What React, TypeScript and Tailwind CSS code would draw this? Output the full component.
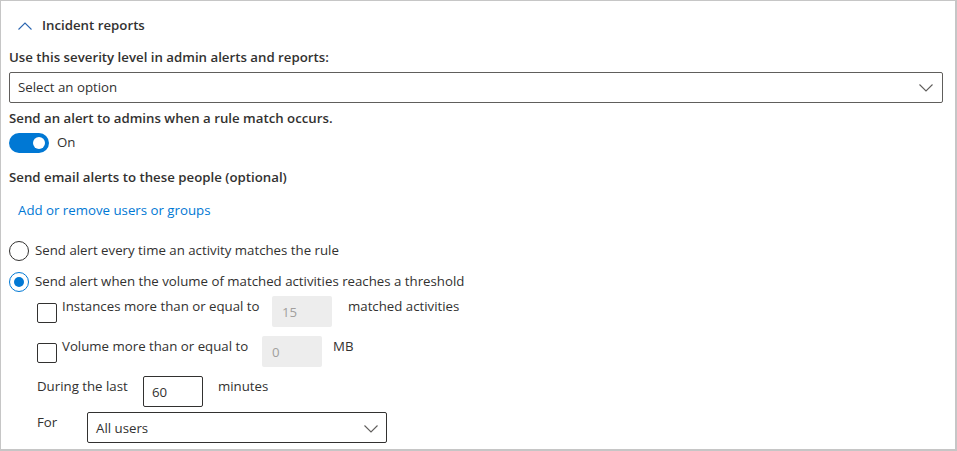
import React, { useState } from "react";

const font = { fontFamily: '"Open Sans", "Noto Sans", Arial, sans-serif' };

const Chevron = ({ up = false, className = "" }: { up?: boolean; className?: string }) => (
    <svg width="14" height="8" viewBox="0 0 14 8" className={className} fill="none">
        <path d={up ? "M0.5 7.5 L7 1 L13.5 7.5" : "M0.5 0.5 L7 7 L13.5 0.5"} stroke="currentColor" strokeWidth="1.1"/>
    </svg>
);

const Radio = ({ checked }: { checked: boolean }) => (
    <span
        className={`flex h-[20px] w-[20px] shrink-0 items-center justify-center rounded-full border ${checked ? "border-[#0078d4]" : "border-[#323130]"}`}
    >
        {checked && <span className="h-[10px] w-[10px] rounded-full bg-[#0078d4]"/>}
    </span>
);

const Checkbox = () => (
    <span className="mt-[7px] h-[20px] w-[20px] shrink-0 rounded-[2px] border border-[#323130] bg-white"/>
);

export default function App() {
    const [on] = useState(true);

    return (
        <div
            className="h-[451px] w-[957px] overflow-hidden border-t border-l border-r-2 border-b-2 border-[#c6c6c6] bg-white pl-[8px] pr-[12px] text-[13.25px] text-[#323130]"
            style={font}
        >
            {/* header */}
            <div className="mt-[15px] flex h-[20px] items-center pl-[8px]">
                <Chevron up className="w-[16px] text-[#2b65b0]"/>
                <span className="ml-[9px] font-semibold">Incident reports</span>
            </div>

            <div className="mt-[11px] h-[20px] font-semibold leading-[20px]">
                Use this severity level in admin alerts and reports:
            </div>
            <div className="mt-[5px] flex h-[31px] items-center justify-between rounded-[2px] border border-[#605e5c] pl-[8px] pr-[9px]">
                <span>Select an option</span>
                <Chevron className="text-[#605e5c]"/>
            </div>

            <div className="mt-[5px] h-[20px] font-semibold leading-[20px]">
                Send an alert to admins when a rule match occurs.
            </div>
            <div className="mt-[5px] flex h-[20px] items-center">
                <span className="flex h-[20px] w-[40px] items-center justify-end rounded-full bg-[#0078d4] pr-[4px]">
                    <span className="h-[12px] w-[12px] rounded-full bg-white"/>
                </span>
                <span className="ml-[8px]">{on ? "On" : "Off"}</span>
            </div>

            <div className="mt-[14px] h-[20px] font-semibold leading-[20px]">
                Send email alerts to these people (optional)
            </div>
            <div className="mt-[13px] h-[20px] pl-[9px] leading-[20px] text-[#0078d4]">
                Add or remove users or groups
            </div>

            <div className="mt-[21px] flex h-[20px] items-center">
                <Radio checked={false}/>
                <span className="ml-[6px]">Send alert every time an activity matches the rule</span>
            </div>
            <div className="mt-[11px] flex h-[20px] items-center">
                <Radio checked/>
                <span className="ml-[6px]">Send alert when the volume of matched activities reaches a threshold</span>
            </div>

            <div className="pl-[28px]">
                <div className="mt-[4px] flex items-start">
                    <Checkbox/>
                    <span className="ml-[5px] w-[210px] leading-[20px]">Instances more than or equal to</span>
                    <span className="flex h-[31px] w-[60px] items-center rounded-[2px] bg-[#ededed] pl-[10px] pt-[2px] text-[#a19f9d]">15</span>
                    <span className="ml-[16px] leading-[20px]">matched activities</span>
                </div>
                <div className="mt-[9px] flex items-start">
                    <Checkbox/>
                    <span className="ml-[5px] w-[200px] leading-[20px]">Volume more than or equal to</span>
                    <span className="flex h-[31px] w-[60px] items-center rounded-[2px] bg-[#ededed] pl-[10px] pt-[2px] text-[#a19f9d]">0</span>
                    <span className="ml-[11px] leading-[20px]">MB</span>
                </div>
                <div className="mt-[9px] flex items-start">
                    <span className="w-[106px] leading-[20px]">During the last</span>
                    <span className="flex h-[31px] w-[60px] items-center rounded-[2px] border border-[#323130] pl-[8px] pt-[2px]">60</span>
                    <span className="ml-[15px] leading-[20px]">minutes</span>
                </div>
                <div className="mt-[5px] flex items-start">
                    <span className="w-[50px] leading-[20px]">For</span>
                    <span className="flex h-[31px] w-[300px] items-center justify-between rounded-[2px] border border-[#323130] pl-[8px] pr-[8px] pt-[2px]">
                        <span>All users</span>
                        <Chevron className="text-[#605e5c]"/>
                    </span>
                </div>
            </div>
        </div>
    );
}
